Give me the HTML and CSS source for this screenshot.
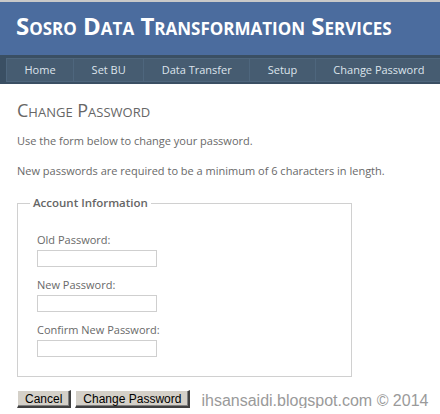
FILE: index.html
```html
<!DOCTYPE html>
<html>
<head>
<meta charset="utf-8">
<link rel="stylesheet" href="styles.css">
</head>
<body>
<div class="page">
  <header class="header">
    <div class="title-bar">
      <h1 class="site-title">Sosro Data Transformation Services</h1>
    </div>
    <nav class="nav-band">
      <ul class="menu">
        <li><a href="#">Home</a></li>
        <li><a href="#">Set BU</a></li>
        <li><a href="#">Data Transfer</a></li>
        <li><a href="#">Setup</a></li>
        <li><a href="#">Change Password</a></li>
      </ul>
    </nav>
  </header>
  <main class="main">
    <h2 class="page-title">Change Password</h2>
    <p class="intro">Use the form below to change your password.</p>
    <p class="intro second">New passwords are required to be a minimum of 6 characters in length.</p>
    <fieldset class="account">
      <legend class="legend">Account Information</legend>
      <div class="field">
        <label class="label">Old Password:</label>
        <input class="text-entry" type="password">
      </div>
      <div class="field">
        <label class="label">New Password:</label>
        <input class="text-entry" type="password">
      </div>
      <div class="field">
        <label class="label">Confirm New Password:</label>
        <input class="text-entry" type="password">
      </div>
    </fieldset>
    <div class="actions">
      <button class="btn" type="button">Cancel</button>
      <button class="btn" type="button">Change Password</button>
      <span class="watermark">ihsansaidi.blogspot.com © 2014</span>
    </div>
  </main>
</div>
</body>
</html>
```

FILE: styles.css
```css
html, body {
  margin: 0;
  padding: 0;
  background: #ffffff;
}

body {
  font-family: "Open Sans", "Noto Sans", sans-serif;
  color: #696969;
  width: 440px;
  overflow: hidden;
}

.page {
  border-top: 2px solid #c9c9c9;
}

.title-bar {
  background: #4b6c9e;
  height: 53px;
  display: flex;
  align-items: center;
  padding-left: 16px;
}

.site-title {
  margin: 0;
  color: #ffffff;
  font-size: 24px;
  font-weight: 700;
  font-variant: small-caps;
  letter-spacing: 0;
  white-space: nowrap;
  line-height: 1;
  padding-bottom: 5px;
}

.nav-band {
  background: #3a4f63;
  height: 29px;
  box-sizing: border-box;
  padding: 3px 0 0 6px;
}

.menu {
  list-style: none;
  margin: 0;
  padding: 0;
  display: flex;
  white-space: nowrap;
}

.menu li a {
  display: block;
  background: #465c71;
  border: 1px solid #4e667d;
  color: #dde4ec;
  text-decoration: none;
  font-size: 11px;
  line-height: 22px;
  height: 22px;
  padding: 0 17.5px;
}

.menu li + li a {
  border-left: none;
}

.main {
  padding: 0 17px;
}

.page-title {
  margin: 16px 0 0;
  font-size: 18px;
  font-weight: 400;
  font-variant: small-caps;
  line-height: 20px;
  color: #666666;
}

.intro {
  margin: 13px 0 0;
  font-size: 11px;
  line-height: 16px;
}

.intro.second {
  margin-top: 14px;
}

.account {
  margin: 16px 0 0;
  width: 335px;
  box-sizing: border-box;
  border: 1px solid #d0d0d0;
  padding: 21px 0 19px 19px;
}

.legend {
  font-size: 11.5px;
  font-weight: 600;
  line-height: 16px;
  color: #666666;
  padding: 0 3px;
  margin-left: -7px;
}

.field {
  display: flex;
  flex-direction: column;
  align-items: flex-start;
}

.field + .field {
  margin-top: 10px;
}

.label {
  font-size: 11px;
  line-height: 16px;
  margin-bottom: 2px;
}

.text-entry {
  width: 120px;
  height: 17px;
  box-sizing: border-box;
  border: 1px solid #cfcfcf;
  background: #ffffff;
  margin: 0;
  padding: 0 2px;
}

.actions {
  margin-top: 11px;
  display: flex;
  align-items: flex-end;
  white-space: nowrap;
}

.btn {
  flex: 0 0 auto;
  white-space: nowrap;
  font-family: "Liberation Sans", Arial, sans-serif;
  font-size: 12px;
  color: #000000;
  background: #d4d0c8;
  height: 18px;
  box-sizing: border-box;
  padding: 0 7px;
  margin: 0 4px 0 0;
  border-style: solid;
  border-width: 1px 2px 2px 1px;
  border-color: #ffffff #404040 #404040 #ffffff;
  box-shadow: inset -1px -1px 0 #808080;
  border-radius: 0;
  line-height: 14px;
}

.watermark {
  flex: 0 0 auto;
  margin-left: 7px;
  font-family: "Liberation Sans", Arial, sans-serif;
  font-size: 16px;
  color: #9a9a9a;
  line-height: 20px;
  white-space: nowrap;
  position: relative;
  top: 3px;
}
```
